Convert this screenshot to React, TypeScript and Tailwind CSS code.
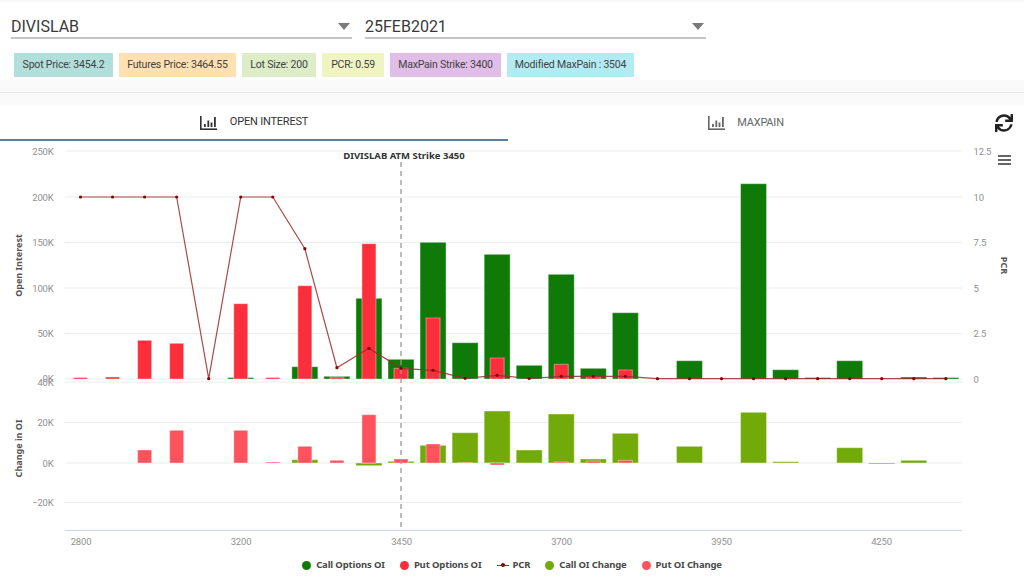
import { FaSync } from 'react-icons/fa';

// one entry per strike, pixel tops read off the two panes
const STEP = 32.05;
const START = 80.5;
const OI_BASE = 379;
const CHG_BASE = 463;

const callOi: [number, number][] = [
  [5, 377.5], [7, 366.7], [8, 376.3], [9, 298.3], [10, 359.3], [11, 242.3], [12, 342.7], [13, 254.3],
  [14, 365.3], [15, 274.3], [16, 368.3], [17, 312.7], [19, 360.7], [21, 183.7], [22, 369.7], [23, 377.5],
  [24, 360.7], [26, 377], [27, 377.5],
];
const putOi: [number, number][] = [
  [0, 377.5], [1, 377], [2, 340.3], [3, 343.3], [5, 303.7], [6, 377.5], [7, 285.7], [8, 377], [9, 243.7],
  [10, 368.3], [11, 318], [13, 358], [15, 364.3], [16, 376.7], [17, 370],
];
const callChg: [number, number][] = [
  [7, 459.7], [9, 465.7], [10, 461.3], [11, 445.3], [12, 432.7], [13, 411], [14, 450], [15, 414], [16, 459],
  [17, 433.3], [19, 446.3], [21, 412.3], [22, 461.7], [24, 447.7], [25, 464], [26, 460.3],
];
const putChg: [number, number][] = [
  [2, 450], [3, 430.3], [5, 430.3], [6, 462], [7, 446.3], [8, 460.3], [9, 414.7], [10, 459], [11, 444],
  [12, 462.5], [13, 465], [15, 462], [16, 461], [17, 460.3],
];
const pcr = [
  197, 197, 197, 197, 378.7, 197, 197, 248.7, 367.7, 348.3, 368.3, 370.3, 378.3, 375.3, 378.5, 376.3, 376.3,
  376.3, 378.7, 378.7, 378.7, 378.7, 378.7, 378.7, 378.7, 378.7, 378.7, 378.7,
];

const chips = [
  { label: 'Spot Price: 3454.2', cls: 'bg-[#b2dfdb] w-[99px]' },
  { label: 'Futures Price: 3464.55', cls: 'bg-[#ffe0b2] w-[117px]' },
  { label: 'Lot Size: 200', cls: 'bg-[#dcedc8] w-[74px]' },
  { label: 'PCR: 0.59', cls: 'bg-[#f0f4c3] w-[62px]' },
  { label: 'MaxPain Strike: 3400', cls: 'bg-[#e1bee7] w-[111px]' },
  { label: 'Modified MaxPain : 3504', cls: 'bg-[#b2ebf2] w-[127px]' },
];

const leftLabels: [string, number][] = [
  ['250K', 154.5], ['200K', 200.5], ['150K', 246], ['100K', 291.5], ['50K', 337], ['0K', 381.5], ['40K', 385.5],
  ['20K', 426], ['0K', 466.5], ['−20K', 506],
];
const rightLabels: [string, number][] = [
  ['12.5', 154.5], ['10', 200.5], ['7.5', 246], ['5', 291.5], ['2.5', 337], ['0', 382.5],
];
const xLabels: [string, number][] = [
  ['2800', 81], ['3200', 241], ['3450', 401.5], ['3700', 561.5], ['3950', 721.5], ['4250', 881.5],
];
const gridLines = [151, 197, 242.5, 288, 333.5, 379, 382, 422.5, 463, 502.5];

const axisCls = "fill-[#909090] text-[9.5px] tracking-[-0.2px] font-['Roboto',sans-serif]";
const titleCls = "fill-[#555555] text-[9px] font-bold font-['Noto_Sans',sans-serif]";

const cx = (i: number) => START + STEP * i;

function Bars({ data, base, width, fill }: { data: [number, number][]; base: number; width: number; fill: string }) {
  return (
    <g>
      {data.map(([i, top]) => (
        <rect
          key={i}
          x={cx(i) - width / 2}
          y={Math.min(top, base)}
          width={width}
          height={Math.abs(base - top)}
          fill={fill}
          stroke="#ffffff"
          strokeOpacity="0.4"
          strokeWidth="1"
        />
      ))}
    </g>
  );
}

function BarIcon({ color }: { color: string }) {
  return (
    <svg width="17" height="14" viewBox="0 0 17 14" fill={color}>
      <rect x="0" y="0" width="1.6" height="14" />
      <rect x="0" y="12.4" width="17" height="1.6" />
      <rect x="4" y="8" width="1.8" height="3" />
      <rect x="7.4" y="4.5" width="1.8" height="6.5" />
      <rect x="10.6" y="6.5" width="1.8" height="4.5" />
      <rect x="14" y="1" width="1.8" height="10" />
    </svg>
  );
}

function Select({ value }: { value: string }) {
  return (
    <div className="flex h-[24px] w-[341px] items-center justify-between border-b-2 border-[#c4c4c4] text-base text-[#3a3a3a]">
      <span className="pt-[1px]">{value}</span>
      <span className="mr-[2px] h-0 w-0 border-x-[6.5px] border-t-[7px] border-x-transparent border-t-[#7a7a7a]" />
    </div>
  );
}

function Chart() {
  return (
    <svg width="1024" height="414" viewBox="0 141 1024 414" className="block">
      {gridLines.map((y) => (
        <line key={y} x1="65" x2="962" y1={y} y2={y} stroke="#ececec" strokeWidth="1" />
      ))}
      <line x1="65" x2="962" y1="530.5" y2="530.5" stroke="#ccd6eb" strokeWidth="1" />

      {leftLabels.map(([t, y], i) => (
        <text key={i} x="53.5" y={y} textAnchor="end" className={axisCls}>{t}</text>
      ))}
      {rightLabels.map(([t, y]) => (
        <text key={t} x="973.5" y={y} className={axisCls}>{t}</text>
      ))}
      {xLabels.map(([t, x]) => (
        <text key={t} x={x} y="545" textAnchor="middle" className={axisCls}>{t}</text>
      ))}

      <text transform="translate(22 265.5) rotate(-90)" textAnchor="middle" className={titleCls}>Open Interest</text>
      <text transform="translate(22 448.5) rotate(-90)" textAnchor="middle" className={titleCls}>Change in OI</text>
      <text transform="translate(1001 265.5) rotate(90)" textAnchor="middle" className={titleCls}>PCR</text>

      <Bars data={callOi} base={OI_BASE} width={26} fill="#0f7a08" />
      <Bars data={putOi} base={OI_BASE} width={14} fill="#fb2e3c" />
      <Bars data={callChg} base={CHG_BASE} width={26} fill="#72aa0a" />
      <Bars data={putChg} base={CHG_BASE} width={14} fill="#fe525c" />

      <line x1="401" x2="401" y1="162" y2="530" stroke="#999999" strokeWidth="1.3" strokeDasharray="5 4" />
      <text x="404" y="159" textAnchor="middle" className="fill-[#333333] text-[9.5px] font-bold font-['Noto_Sans',sans-serif]">
        DIVISLAB ATM Strike 3450
      </text>

      <polyline
        points={pcr.map((y, i) => `${cx(i)},${y}`).join(' ')}
        fill="none"
        stroke="#9c2a2a"
        strokeOpacity="0.85"
        strokeWidth="1.2"
      />
      {pcr.map((y, i) => (
        <circle key={i} cx={cx(i)} cy={y} r="1.6" fill="#8b0000" />
      ))}

      <rect x="998" y="155" width="13" height="2" fill="#666666" />
      <rect x="998" y="159" width="13" height="2" fill="#666666" />
      <rect x="998" y="163" width="13" height="2" fill="#666666" />
    </svg>
  );
}

function LegendDot({ color, label }: { color: string; label: string }) {
  return (
    <div className="flex items-center gap-[5px]">
      <span className={`h-[9px] w-[9px] rounded-full ${color}`} />
      <span>{label}</span>
    </div>
  );
}

export default function App() {
  return (
    <div className="h-[578px] w-[1024px] overflow-hidden bg-white font-['Roboto',sans-serif]">
      <div className="h-[2px] bg-[#f8f8f8]" />
      <div className="flex gap-[13px] pl-[11px] pt-[13px]">
        <Select value="DIVISLAB" />
        <Select value="25FEB2021" />
      </div>
      <div className="flex gap-[6px] pl-[14px] pt-[14px]">
        {chips.map((c) => (
          <div
            key={c.label}
            className={`flex h-[24px] items-center justify-center text-[10.5px] tracking-[-0.2px] text-[#424242] ${c.cls}`}
          >
            {c.label}
          </div>
        ))}
      </div>
      <div className="mt-[3px] flex h-[25px] flex-col bg-[#fafafa]">
        <div className="mt-[12px] border-t border-[#e6e6e6]" />
      </div>
      <div className="flex h-[36px]">
        <div className="flex w-[508px] items-center justify-center gap-[13px] border-b-2 border-[#5f7f99] pt-[1px] text-[11px] tracking-[-0.2px] text-[#333333]">
          <BarIcon color="#333333" />
          <span>OPEN INTEREST</span>
        </div>
        <div className="flex w-[476px] items-center justify-center gap-[12px] text-[11px] tracking-[-0.2px] text-[#666666]">
          <BarIcon color="#666666" />
          <span>MAXPAIN</span>
        </div>
        <div className="flex flex-1 items-center justify-center pb-[1px] text-[#222222]">
          <FaSync size={18} />
        </div>
      </div>
      <Chart />
      <div className="flex justify-center gap-[15px] pt-[3px] font-['Noto_Sans',sans-serif] text-[9.5px] font-bold tracking-[-0.15px] text-[#4a4a4a]">
        <LegendDot color="bg-[#0f7a08]" label="Call Options OI" />
        <LegendDot color="bg-[#fb2e3c]" label="Put Options OI" />
        <div className="flex items-center gap-[4px]">
          <span className="relative h-[1px] w-[12px] bg-[#a52a2a]">
            <span className="absolute left-[4px] top-[-1.5px] h-[4px] w-[4px] rounded-full bg-[#8b0000]" />
          </span>
          <span>PCR</span>
        </div>
        <LegendDot color="bg-[#72aa0a]" label="Call OI Change" />
        <LegendDot color="bg-[#fe525c]" label="Put OI Change" />
      </div>
    </div>
  );
}
